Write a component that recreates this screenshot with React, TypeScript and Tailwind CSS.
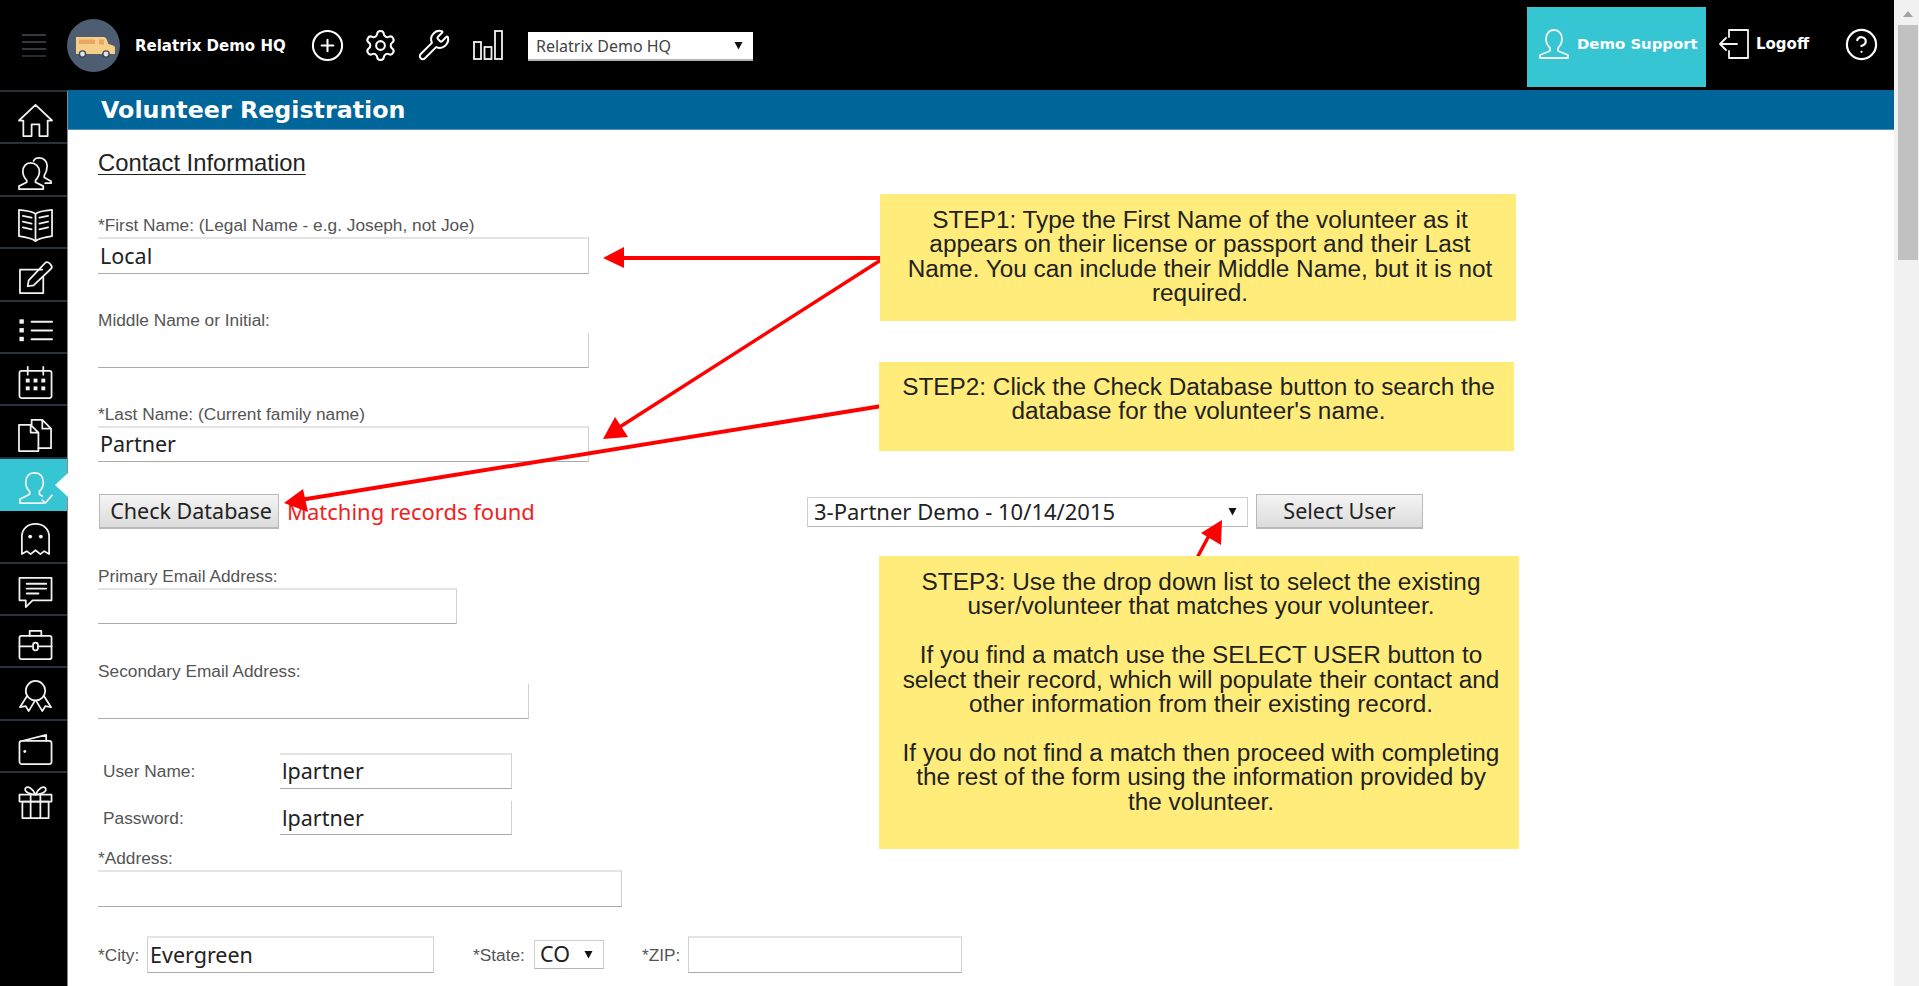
import React from "react";
import { CirclePlus, Settings, Wrench, CircleHelp } from "lucide-react";

const S = ({ children }: { children: React.ReactNode }) => (
  <svg width="35" height="35" viewBox="0 0 36 36" fill="none" stroke="#f2f2f2" strokeWidth="1.8" strokeLinejoin="round" strokeLinecap="round">
    {children}
  </svg>
);

const icons: React.ReactNode[] = [
  <S><path d="M1 18 18 2l17 16h-4.500v16H22V22h-8v12H5.500V18Z" /></S>,
  <S><path d="M13 7c-5 0-8 4-8 9 0 4 2 7 4 9v2l-8 4v3h25v-3l-8-4v-2c2-2 4-5 4-9 0-5-4-9-9-9Z" /><path d="M16 5c1-2 4-3 6-3 5 0 8 4 8 8 0 4-1 7-3 10v2l7 4v2h-6" /></S>,
  <S><path d="M18 6C14 3 8 3 1 2v27c7 1 13 2 17 5 4-3 10-4 17-5V2c-7 1-13 1-17 4Z" /><path d="M18 6v28M5 8l9 2M5 14l9 2M5 20l9 2M31 8l-9 2M31 14l-9 2M31 20l-9 2" /></S>,
  <S><path d="M25 10H2v24h24V17" /><path d="M10 27l1-6L28 3c1-1 3-1 5 1s2 4 1 5L16 26l-6 1Z" /></S>,
  <S><path d="M14 9h21M14 18h21M14 27h21" strokeWidth="2" /><rect x="1.500" y="6.500" width="4.500" height="4.500" fill="#f2f2f2" stroke="none" /><rect x="1.500" y="15.500" width="4.500" height="4.500" fill="#f2f2f2" stroke="none" /><rect x="1.500" y="24.500" width="4.500" height="4.500" fill="#f2f2f2" stroke="none" /></S>,
  <S><rect x="1.500" y="6" width="33" height="28" rx="2" /><path d="M10 2v8M26 2v8" /><g fill="#f2f2f2" stroke="none"><rect x="8" y="14" width="4" height="4" /><rect x="16" y="14" width="4" height="4" /><rect x="24" y="14" width="4" height="4" /><rect x="8" y="22" width="4" height="4" /><rect x="16" y="22" width="4" height="4" /><rect x="24" y="22" width="4" height="4" /></g></S>,
  <S><path d="M13 7H1v27h20V15l-8-8v8h8" /><path d="M14 7V2h11l9 9v20H21M25 2v9h9" /></S>,
  <S><path d="M17 2c-6 0-9 4-9 10 0 4 2 7 4 9v3l-10 5v4h24" /><path d="M17 2c6 0 9 4 9 10 0 4-2 7-4 9v3l3 2" /><path d="M25 30l3 3 7-8" /></S>,
  <S><path d="M4 33V15C4 7 10 2 18 2s14 5 14 13v18l-5-3-4 3-5-4-5 4-4-3-5 3Z" /><circle cx="12.500" cy="15" r="2" fill="#f2f2f2" stroke="none" /><circle cx="23.500" cy="15" r="2" fill="#f2f2f2" stroke="none" /></S>,
  <S><path d="M1.500 3h33v23H15l-7 7v-7H1.500Z" /><path d="M9 9h20M9 14h20M9 19h12" strokeWidth="2" /></S>,
  <S><rect x="1.500" y="9" width="33" height="24" rx="2" /><path d="M12 9V4h12v5M1.500 20h13M21.500 20h13" /><rect x="15.500" y="16" width="5" height="8" rx="2.500" /></S>,
  <S><circle cx="18" cy="12" r="10" /><path d="M9 18 2 29l6-1 3 5 6-10M27 18l7 11-6-1-3 5-6-10" /></S>,
  <S><path d="M5 9 29 3v6" /><rect x="1.500" y="9" width="33" height="24" rx="2.500" /><circle cx="7" cy="20" r="1.500" fill="#f2f2f2" stroke="none" /></S>,
  <S><rect x="1.500" y="10" width="33" height="7" /><rect x="4.500" y="17" width="27" height="17" /><path d="M13 10v24M23 10v24" /><path d="M18 10C15 3 10 1 8 3s0 6 10 7C28 9 30 5 28 3s-7 0-10 7Z" /></S>,
];

const Arrow = () => (
  <svg width="9" height="9" viewBox="0 0 9 9" className="shrink-0"><path d="M0.500 1h8L4.500 8.500Z" fill="#111" /></svg>
);

function Dropdown({ value, className = "", textClass = "" }: { value: string; className?: string; textClass?: string }) {
  return (
    <div
      role="combobox"
      aria-expanded="false"
      className={`flex items-center justify-between bg-white border border-[#cfcfcf] border-b-[#b5b5b5] whitespace-nowrap shrink-0 [font-family:'Noto_Sans',sans-serif] text-[#222] ${className}`}
    >
      <span className={textClass}>{value}</span>
      <Arrow />
    </div>
  );
}

function Label({ children, className = "" }: { children: React.ReactNode; className?: string }) {
  return (
    <label className={`block h-[20px] leading-[20px] text-[17.300px] text-[#555] whitespace-nowrap [font-family:'Liberation_Sans',Arial,sans-serif] ${className}`}>
      {children}
    </label>
  );
}

function Input({ value = "", className = "" }: { value?: string; className?: string }) {
  return (
    <input
      readOnly
      value={value}
      className={`block bg-white outline-none pl-[2px] pb-[2px] text-[21.500px] text-[#222] [font-family:'Noto_Sans',sans-serif] border-t-2 border-r border-b border-t-[#e4e4e4] border-r-[#d0d0d0] border-b-[#aaaaaa] ${className}`}
    />
  );
}

function Btn({ children, className = "" }: { children: React.ReactNode; className?: string }) {
  return (
    <button className={`h-[35px] border border-[#b8b8b8] border-b-2 bg-gradient-to-b from-[#f4f4f4] to-[#dcdcdc] text-[21.500px] text-[#222] whitespace-nowrap [font-family:'Noto_Sans',sans-serif] leading-none ${className}`}>
      {children}
    </button>
  );
}

function Callout({ className, children }: { className: string; children: React.ReactNode }) {
  return (
    <div className={`absolute bg-[#ffec7a] text-center text-[#222] text-[24.350px] leading-[24.400px] pl-[22px] pr-[18px] [font-family:'Liberation_Sans',Arial,sans-serif] ${className}`}>
      {children}
    </div>
  );
}

export default function App() {
  const boldFont = "[font-family:'DejaVu_Sans',Verdana,sans-serif] font-bold";
  return (
    <div className="w-full h-[986px] overflow-hidden flex flex-col bg-white">
      <div className="flex flex-1 min-h-0">
        <div className="flex-1 min-w-0 flex flex-col">
          <header className="h-[90px] shrink-0 bg-black flex items-center text-white relative">
            <div className="w-[67px] flex flex-col gap-[5px] pl-[22px] shrink-0">
              <span className="block w-[24px] h-[2px] bg-[#33393f]" />
              <span className="block w-[24px] h-[2px] bg-[#33393f]" />
              <span className="block w-[24px] h-[2px] bg-[#33393f]" />
              <span className="block w-[24px] h-[2px] bg-[#262b30]" />
            </div>
            <svg width="53" height="53" viewBox="0 0 53 53" className="shrink-0 mt-[1px]">
              <circle cx="26.500" cy="26.500" r="26.500" fill="#4f5d73" />
              <path d="M9 18h28c1 0 2 1 2.500 2l2 5 4.500 1.500c1.500.5 2 1.500 2 2.500v6H9Z" fill="#f5cf87" />
              <rect x="12" y="20.500" width="16" height="4.500" fill="#e8a765" />
              <rect x="32" y="20.500" width="5" height="5" fill="#e8a765" />
              <circle cx="15.500" cy="35" r="3.800" fill="#3e4a5c" />
              <circle cx="39" cy="35" r="3.800" fill="#3e4a5c" />
              <circle cx="15.500" cy="35" r="2.400" fill="#e3e3e3" />
              <circle cx="39" cy="35" r="2.400" fill="#e3e3e3" />
            </svg>
            <span className={`ml-[15px] w-[175px] mt-[2px] shrink-0 text-[15px] whitespace-nowrap ${boldFont}`}>Relatrix Demo HQ</span>
            <CirclePlus size={35} strokeWidth={1.4} className="shrink-0" />
            <Settings size={35} strokeWidth={1.4} className="ml-[18px] shrink-0" />
            <Wrench size={34} strokeWidth={1.4} className="ml-[19px] shrink-0" />
            <svg width="30" height="30" viewBox="0 0 30 30" fill="none" stroke="#f2f2f2" strokeWidth="1.800" className="ml-[22px] shrink-0">
              <rect x="1" y="12" width="7" height="17" />
              <rect x="11.500" y="17" width="7" height="12" />
              <rect x="22" y="1" width="7" height="28" />
            </svg>
            <Dropdown
              value="Relatrix Demo HQ"
              className="ml-[25px] w-[225px] h-[29px] mt-[3px] border-0 border-b-2 border-b-[#aaa] pl-[8px] pr-[10px] text-[16px]"
              textClass="text-[#444]"
            />
            <div className="ml-auto flex items-center h-full">
              <div className="self-start mt-[7px] w-[179px] h-[80px] bg-[#36c6d3] flex items-center pl-[12px] gap-[8px]">
                <svg width="30" height="30" viewBox="0 0 30 30" fill="none" stroke="#f2f2f2" strokeWidth="1.800" strokeLinejoin="round" className="-mt-[7px] shrink-0">
                  <path d="M15 1c-5 0-8 4-8 9 0 4 2 7 4 9v3L1 26v3h28v-3l-10-4v-3c2-2 4-5 4-9 0-5-3-9-8-9Z" />
                </svg>
                <span className={`text-[14.900px] text-white whitespace-nowrap -mt-[6px] ${boldFont}`}>Demo Support</span>
              </div>
              <svg width="30" height="30" viewBox="0 0 30 30" fill="none" stroke="#f2f2f2" strokeWidth="1.800" strokeLinejoin="round" strokeLinecap="round" className="ml-[13px] -mt-[3px] shrink-0">
                <path d="M10 8V1h19v28H10v-7M1 15h17M7 9l-6 6 6 6" />
              </svg>
              <span className={`ml-[7px] text-[15px] w-[88px] -mt-[1px] ${boldFont}`}>Logoff</span>
              <CircleHelp size={35} strokeWidth={1.5} className="mr-[15px] -mt-[1px] shrink-0" />
            </div>
          </header>
          <div className="flex flex-1 min-h-0">
            <nav className="w-[68px] shrink-0 bg-black border-r border-r-[#8a8a8a] border-t-2 border-t-[#2a2f35]">
              {icons.map((ic, i) => (
                <div
                  key={i}
                  className={`relative h-[52.400px] flex items-center justify-center pt-[7px] pl-[3px] ${
                    i === 7 ? "bg-[#36c6d3]" : i === 13 ? "" : "border-b-2 border-b-[#28323c]"
                  }`}
                >
                  {ic}
                  {i === 7 && (
                    <span className="absolute right-[-1px] top-[14px] w-0 h-0 border-y-[12px] border-y-transparent border-r-[13px] border-r-white" />
                  )}
                </div>
              ))}
            </nav>
            <main className="flex-1 min-w-0 flex flex-col">
              <h1 className={`h-[40px] shrink-0 bg-[#006699] border-b border-b-[#4a93bd] text-white pl-[33px] text-[23.750px] leading-[41px] whitespace-nowrap ${boldFont}`}>
                Volunteer Registration
              </h1>
              <div className="relative flex-1 min-h-0 overflow-hidden pl-[30px] pt-[20px]">
                <h2 className="h-[29px] leading-[26px] text-[23.800px] text-[#222] underline underline-offset-[3px] decoration-1 [font-family:'Liberation_Sans',Arial,sans-serif]">
                  Contact Information
                </h2>
                <Label className="mt-[36px]">*First Name: (Legal Name - e.g. Joseph, not Joe)</Label>
                <Input value="Local" className="mt-[2px] w-[491px] h-[37px]" />
                <Label className="mt-[36px]">Middle Name or Initial:</Label>
                <Input className="mt-[2px] w-[491px] h-[36px] border-t-white" />
                <Label className="mt-[36px]">*Last Name: (Current family name)</Label>
                <Input value="Partner" className="mt-[2px] w-[491px] h-[36px]" />

                <div className="mt-[32px] h-[35px] flex items-center">
                  <div className="w-[709px] shrink-0 flex items-center pl-[1px]">
                    <Btn className="w-[180px] pl-[4px]">Check Database</Btn>
                    <span className="ml-[8px] text-[22px] text-[#ee2222] [font-family:'Noto_Sans',sans-serif]">Matching records found</span>
                  </div>
                  <Dropdown
                    value="3-Partner Demo - 10/14/2015"
                    className="w-[441px] h-[30px] pl-[6px] pr-[10px] text-[22px]"
                  />
                  <Btn className="ml-[8px] w-[167px]">Select User</Btn>
                </div>

                <Label className="mt-[37px]">Primary Email Address:</Label>
                <Input className="mt-[2px] w-[359px] h-[36px]" />
                <Label className="mt-[37px]">Secondary Email Address:</Label>
                <Input className="mt-[2px] w-[431px] h-[36px] border-t-white" />

                <div className="mt-[34px] flex items-center pl-[5px]">
                  <Label className="w-[177px] shrink-0">User Name:</Label>
                  <Input value="lpartner" className="w-[232px] h-[36px]" />
                </div>
                <div className="mt-[11px] flex items-center pl-[5px]">
                  <Label className="w-[177px] shrink-0">Password:</Label>
                  <Input value="lpartner" className="w-[232px] h-[35px] border-t-white" />
                </div>

                <Label className="mt-[13px]">*Address:</Label>
                <Input className="mt-[2px] w-[524px] h-[37px]" />

                <div className="mt-[29px] flex items-center">
                  <Label className="w-[49px] shrink-0">*City:</Label>
                  <Input value="Evergreen" className="w-[287px] h-[37px] border-l border-l-[#d0d0d0]" />
                  <Label className="ml-[39px] w-[61px] shrink-0">*State:</Label>
                  <Dropdown value="CO" className="w-[70px] h-[29px] pl-[5px] pr-[10px] text-[21.500px]" />
                  <Label className="ml-[38px] w-[46px] shrink-0">*ZIP:</Label>
                  <Input className="w-[274px] h-[37px] border-l border-l-[#d0d0d0]" />
                </div>

                <svg className="absolute left-0 top-0 pointer-events-none" width="1460" height="760" viewBox="68 130 1460 760" fill="#ff0000" stroke="none">
                  <path d="M884 258H622" stroke="#ff0000" strokeWidth="4" />
                  <path d="M603 258 624 247v21Z" />
                  <path d="M884 258 615 430" stroke="#ff0000" strokeWidth="3.500" />
                  <path d="M603 439 615 417 628 437Z" />
                  <path d="M882 406 300 500" stroke="#ff0000" strokeWidth="4" />
                  <path d="M284 503 303 489 308 512Z" />
                  <path d="M1197 558 1212 530" stroke="#ff0000" strokeWidth="3.500" />
                  <path d="M1222 520 1201 533 1221 545Z" />
                </svg>
                <Callout className="left-[812px] top-[64px] w-[636px] h-[127px] pt-[14px]">
                  STEP1: Type the First Name of the volunteer as it appears on their license or passport and their Last Name. You can include their Middle Name, but it is not required.
                </Callout>
                <Callout className="left-[811px] top-[232px] w-[635px] h-[89px] pt-[13px]">
                  STEP2: Click the Check Database button to search the database for the volunteer's name.
                </Callout>
                <Callout className="left-[811px] top-[426px] w-[640px] h-[293px] pt-[14px]">
                  STEP3: Use the drop down list to select the existing user/volunteer that matches your volunteer.
                  <br /><br />
                  If you find a match use the SELECT USER button to select their record, which will populate their contact and other information from their existing record.
                  <br /><br />
                  If you do not find a match then proceed with completing the rest of the form using the information provided by the volunteer.
                </Callout>
              </div>
            </main>
          </div>
        </div>
        <div className="w-[25px] shrink-0 bg-[#f1f1f1] flex flex-col items-center pl-[3px]">
          <svg width="10" height="25" viewBox="0 0 10 25"><path d="M0 17 5 11l5 6Z" fill="#a3a3a3" /></svg>
          <div className="w-[20px] h-[235px] bg-[#c1c1c1]" />
        </div>
      </div>
    </div>
  );
}
